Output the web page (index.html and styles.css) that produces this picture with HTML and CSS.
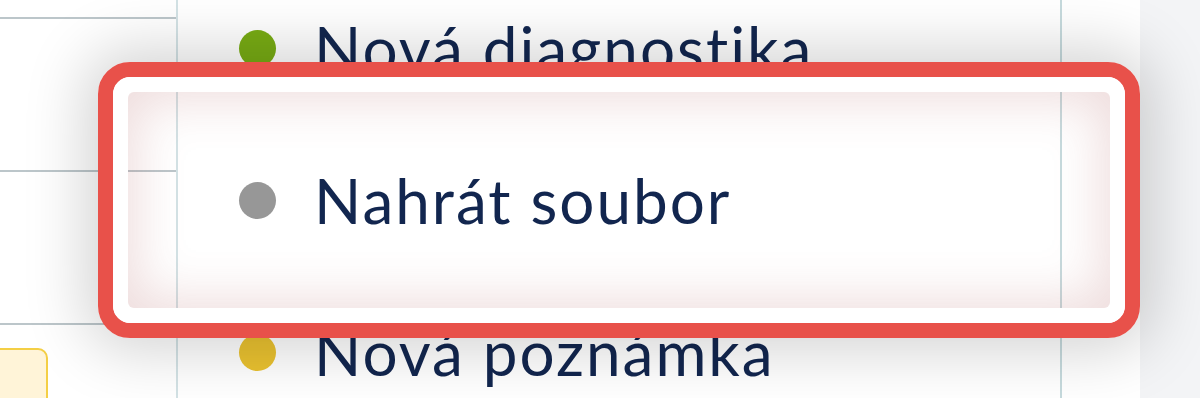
FILE: index.html
```html
<!DOCTYPE html>
<html lang="cs">
<head>
	<meta charset="UTF-8" />
	<meta name="viewport" content="width=device-width, initial-scale=1.0" />
	<title>Nahrát soubor</title>
	<link rel="stylesheet" href="styles.css">
</head>
<body>
	<div class="screen">
		<aside class="side">
			<div class="side-row"></div>
			<div class="side-row"></div>
			<div class="side-row"></div>
			<div class="side-row side-row--last">
				<div class="tag"></div>
			</div>
		</aside>

		<ul class="menu">
			<li class="menu-item"><span class="dot dot--green"></span>Nová diagnostika</li>
			<li class="menu-item"><span class="dot dot--grey"></span>Nahrát soubor</li>
			<li class="menu-item"><span class="dot dot--yellow"></span>Nová poznámka</li>
		</ul>

		<div class="gutter"></div>
		<div class="backdrop"></div>

		<div class="highlight">
			<div class="highlight-ring">
				<div class="highlight-glow"></div>
			</div>
		</div>
	</div>
</body>
</html>
```

FILE: styles.css
```css
html, body {
	margin: 0;
	height: 100%;
	overflow: hidden;
	background: #fff;
}

.screen {
	position: relative;
	display: flex;
	height: 398px;
	overflow: hidden;
	font-family: Lato, 'Noto Sans', sans-serif;
}

.side {
	width: 176px;
	border-right: 2px solid #d3e2e5;
	display: flex;
	flex-direction: column;
	margin-top: -134px;
}

.side-row {
	height: 151px;
	flex: none;
	border-bottom: 2px solid #bcc6ca;
}

.side-row--last {
	border-bottom: 0;
	padding-top: 23px;
}

.tag {
	width: 58px;
	height: 80px;
	margin-left: -10px;
	box-sizing: border-box;
	border: 2px solid #f4cf45;
	border-radius: 10px;
	background: #fff4d8;
}

.menu {
	list-style: none;
	margin: -28px 0 0;
	padding: 0;
	width: 882px;
	border-right: 2px solid #c6dadd;
}

.menu-item {
	display: flex;
	align-items: center;
	height: 152px;
	padding-left: 61px;
	font-size: 62px;
	color: #12264f;
	letter-spacing: 2px;
}

.dot {
	width: 37px;
	height: 37px;
	border-radius: 50%;
	margin-right: 38px;
	flex: none;
}

.dot--green { background: #78ac14; }
.dot--grey { background: #979797; }
.dot--yellow { background: #eac230; }

.gutter {
	width: 78px;
	background: #fff;
}

.backdrop {
	flex: 1;
	background: #f3f4f6;
}

.highlight {
	position: absolute;
	left: 98px;
	top: 62px;
	width: 1042px;
	height: 276px;
	box-sizing: border-box;
	border: 15px solid #e8514a;
	border-radius: 32px;
	box-shadow: 0 0 60px 14px rgba(0, 0, 0, 0.17);
}

.highlight-ring {
	height: 100%;
	box-sizing: border-box;
	border: 15px solid #fff;
	border-radius: 18px;
}

.highlight-glow {
	height: 100%;
	border-radius: 6px;
	box-shadow: inset 0 0 50px 8px rgba(170, 80, 80, 0.2);
}
```
